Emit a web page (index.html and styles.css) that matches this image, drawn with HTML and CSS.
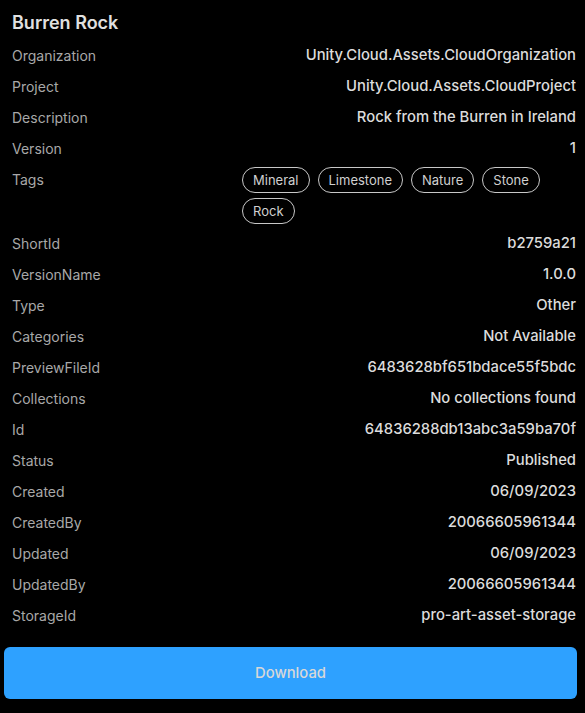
FILE: index.html
```html
<!DOCTYPE html>
<html lang="en">

<head>
  <meta charset="UTF-8">
  <title>Burren Rock</title>
  <link rel="stylesheet" href="styles.css">
</head>

<body>
  <div class="asset">
    <h2 class="asset-title">Burren Rock</h2>

    <div class="props">
      <div class="row"><span class="label">Organization</span><span class="value">Unity.Cloud.Assets.CloudOrganization</span></div>
      <div class="row"><span class="label">Project</span><span class="value">Unity.Cloud.Assets.CloudProject</span></div>
      <div class="row"><span class="label">Description</span><span class="value">Rock from the Burren in Ireland</span></div>
      <div class="row"><span class="label">Version</span><span class="value">1</span></div>
      <div class="row row-tags">
        <span class="label">Tags</span>
        <div class="tags">
          <span class="tag">Mineral</span>
          <span class="tag">Limestone</span>
          <span class="tag">Nature</span>
          <span class="tag">Stone</span>
          <span class="tag">Rock</span>
        </div>
      </div>
      <div class="row"><span class="label">ShortId</span><span class="value">b2759a21</span></div>
      <div class="row"><span class="label">VersionName</span><span class="value">1.0.0</span></div>
      <div class="row"><span class="label">Type</span><span class="value">Other</span></div>
      <div class="row"><span class="label">Categories</span><span class="value">Not Available</span></div>
      <div class="row"><span class="label">PreviewFileId</span><span class="value">6483628bf651bdace55f5bdc</span></div>
      <div class="row"><span class="label">Collections</span><span class="value">No collections found</span></div>
      <div class="row"><span class="label">Id</span><span class="value">64836288db13abc3a59ba70f</span></div>
      <div class="row"><span class="label">Status</span><span class="value">Published</span></div>
      <div class="row"><span class="label">Created</span><span class="value">06/09/2023</span></div>
      <div class="row"><span class="label">CreatedBy</span><span class="value">20066605961344</span></div>
      <div class="row"><span class="label">Updated</span><span class="value">06/09/2023</span></div>
      <div class="row"><span class="label">UpdatedBy</span><span class="value">20066605961344</span></div>
      <div class="row"><span class="label">StorageId</span><span class="value">pro-art-asset-storage</span></div>
    </div>

    <button class="download">Download</button>
  </div>
</body>

</html>
```

FILE: styles.css
```css
body {
  margin: 0;
  background: #000;
  color: #ddd;
  font-family: Inter, 'Noto Sans', sans-serif;
  font-size: 14px;
}

.asset {
  padding: 11px 9px 0 4px;
}

.asset-title {
  margin: 0 0 5px 8px;
  font-size: 18px;
  font-weight: 600;
  line-height: 24px;
  color: #e0e0e0;
}

.props {
  padding-left: 8px;
}

.row {
  display: flex;
  justify-content: space-between;
  align-items: flex-start;
  padding: 7px 0;
  line-height: 17px;
}

.label {
  color: #a8a8a8;
}

.value {
  font-size: 14.8px;
  font-weight: 500;
  color: #dcdcdc;
  text-align: right;
}

.row-tags {
  padding: 3px 0 4px;
}

.row-tags .label {
  padding-top: 4px;
}

.tags {
  width: 334px;
  display: flex;
  flex-wrap: wrap;
  gap: 5px 8px;
}

.tag {
  border: 1px solid #c8c8c8;
  border-radius: 13px;
  padding: 0 10px;
  height: 24px;
  line-height: 24px;
  font-size: 13px;
  color: #d0d0d0;
}

.download {
  display: block;
  width: 573px;
  height: 52px;
  margin-top: 16px;
  border: none;
  border-radius: 6px;
  background: #2ea1ff;
  color: #d8d8d8;
  font-family: inherit;
  font-size: 14.8px;
  font-weight: 500;
}
```
